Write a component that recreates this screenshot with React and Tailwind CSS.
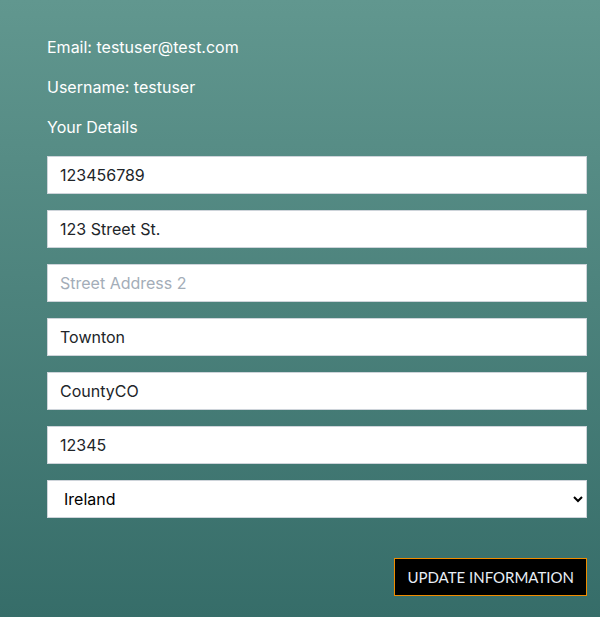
import { useState } from "react";

function App() {
  const [form, setForm] = useState({
    phone: "123456789",
    street1: "123 Street St.",
    street2: "",
    town: "Townton",
    county: "CountyCO",
    postcode: "12345",
    country: "IE",
  });

  const update = (key) => (e) => setForm({ ...form, [key]: e.target.value });

  const inputClass =
    "w-full h-[38px] bg-white border border-[#ced4da] px-[12px] text-[16px] text-[#212529] placeholder:text-[#a3adb8] outline-none";

  return (
    <div
      className="min-h-[617px] w-[600px] bg-gradient-to-b from-[#61978f] to-[#366d69] pl-[47px] pr-[13px] pt-[36px] pb-[21px] text-white"
      style={{ fontFamily: "Inter, 'Noto Sans', sans-serif" }}
    >
      <p className="text-[16px] leading-[22px] mb-[18px]">Email: testuser@test.com</p>
      <p className="text-[16px] leading-[22px] mb-[18px]">Username: testuser</p>
      <p className="text-[16px] leading-[22px] mb-[18px]">Your Details</p>

      <div className="flex flex-col gap-[16px]">
        <input className={inputClass} value={form.phone} onChange={update("phone")} />
        <input className={inputClass} value={form.street1} onChange={update("street1")} />
        <input
          className={inputClass}
          value={form.street2}
          placeholder="Street Address 2"
          onChange={update("street2")}
        />
        <input className={inputClass} value={form.town} onChange={update("town")} />
        <input className={inputClass} value={form.county} onChange={update("county")} />
        <input className={inputClass} value={form.postcode} onChange={update("postcode")} />
        <select
          className="w-full h-[38px] bg-white border border-[#ced4da] pl-[12px] pr-[2px] text-[16px] text-black outline-none"
          value={form.country}
          onChange={update("country")}
        >
          <option value="IE">Ireland</option>
          <option value="GB">United Kingdom</option>
          <option value="US">United States</option>
        </select>
      </div>

      <div className="flex justify-end mt-[40px]">
        <button
          className="h-[38px] px-[12px] bg-black border border-[#f08c00] text-[15px] text-[#e8eef5]"
          style={{ fontFamily: "Lato, sans-serif" }}
        >
          UPDATE INFORMATION
        </button>
      </div>
    </div>
  );
}

export default App;
